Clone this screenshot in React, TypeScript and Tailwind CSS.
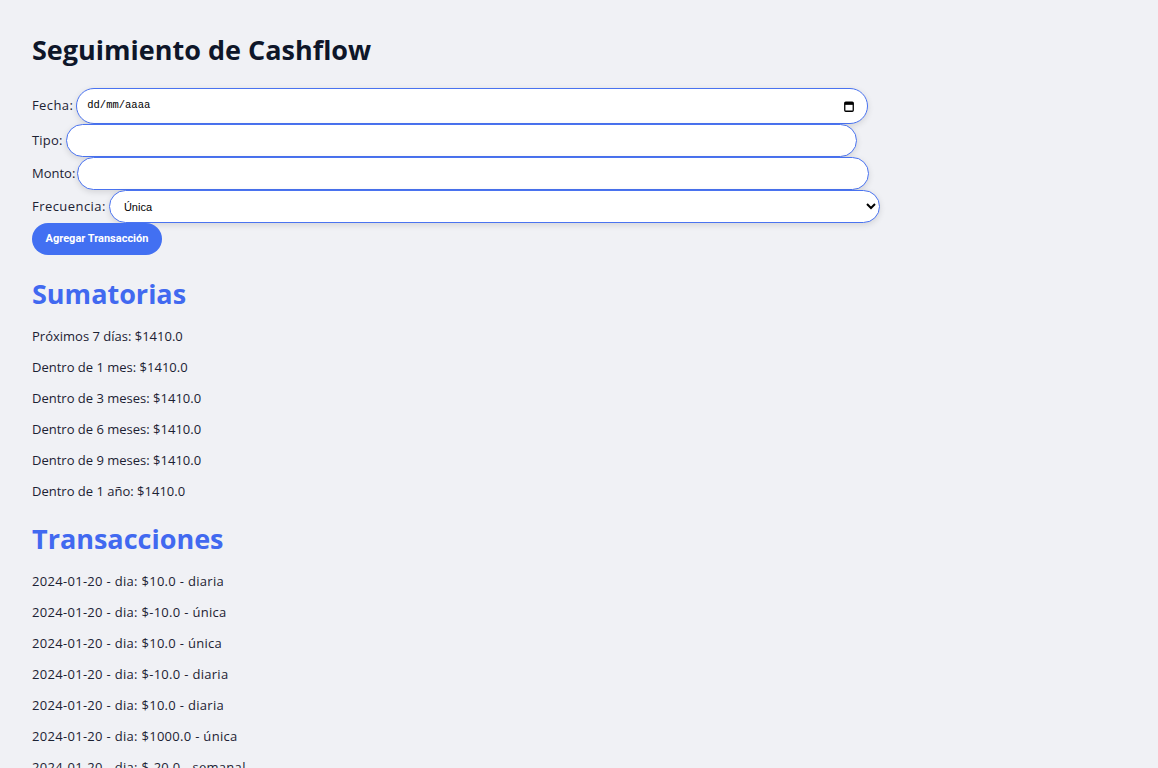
const SUMS = [
  'Próximos 7 días: $1410.0',
  'Dentro de 1 mes: $1410.0',
  'Dentro de 3 meses: $1410.0',
  'Dentro de 6 meses: $1410.0',
  'Dentro de 9 meses: $1410.0',
  'Dentro de 1 año: $1410.0',
];

const TXS = [
  '2024-01-20 - dia: $10.0 - diaria',
  '2024-01-20 - dia: $-10.0 - única',
  '2024-01-20 - dia: $10.0 - única',
  '2024-01-20 - dia: $-10.0 - diaria',
  '2024-01-20 - dia: $10.0 - diaria',
  '2024-01-20 - dia: $1000.0 - única',
  '2024-01-20 - dia: $-20.0 - semanal',
];

const field =
  'bg-white border border-[#4a73f0] rounded-full shadow-[0_2px_6px_rgba(0,0,0,0.12)] outline-none';

function CalIcon() {
  return (
    <svg width="10" height="11" viewBox="0 0 10 11" className="text-black">
      <rect x="0.75" y="1.25" width="8.5" height="9" rx="1" fill="none" stroke="currentColor" strokeWidth="1.3" />
      <rect x="0.75" y="1.25" width="8.5" height="2.6" fill="currentColor" />
    </svg>
  );
}

export default function App() {
  return (
    <div
      className="min-h-screen bg-[#f0f1f5] px-8 pt-[33px] text-[#1c2233]"
      style={{ fontFamily: '"Open Sans", "Noto Sans", sans-serif' }}
    >
      <h1 className="text-[27px] font-bold leading-[34px] text-[#0e1629]">Seguimiento de Cashflow</h1>

      <form className="mt-[21px] text-[13px]" onSubmit={(e) => e.preventDefault()}>
        {/* Fecha */}
        <div className="flex items-center h-[36px]">
          <label className="mr-[3px] tracking-[0.4px]">Fecha:</label>
          <div className={`${field} w-[792px] h-[36px] flex items-center justify-between pl-[10px] pr-[13px]`}>
            <span className="text-[10.5px] text-black" style={{ fontFamily: '"Liberation Mono", monospace' }}>
              dd/mm/aaaa
            </span>
            <CalIcon />
          </div>
        </div>
        {/* Tipo */}
        <div className="flex items-center h-[33px]">
          <label className="mr-[3px] tracking-[0.2px]">Tipo:</label>
          <input type="text" className={`${field} w-[791px] h-[33px] px-[10px]`} />
        </div>
        {/* Monto */}
        <div className="flex items-center h-[33px]">
          <label className="mr-[2px] tracking-[0px]">Monto:</label>
          <input type="text" className={`${field} w-[792px] h-[33px] px-[10px]`} />
        </div>
        {/* Frecuencia */}
        <div className="flex items-center h-[33px]">
          <label className="mr-[3px] tracking-[0.45px]">Frecuencia:</label>
          <select
            className={`${field} w-[771px] h-[33px] pl-[10px] pr-[6px] text-[11px] text-black`}
            style={{ fontFamily: '"Liberation Sans", Arial, sans-serif' }}
            defaultValue="unica"
          >
            <option value="unica">Única</option>
            <option value="diaria">Diaria</option>
            <option value="semanal">Semanal</option>
            <option value="mensual">Mensual</option>
          </select>
        </div>
        <button
          type="submit"
          className="h-[32px] w-[130px] rounded-full bg-[#4270f2] text-white text-[11px] font-bold"
          style={{ fontFamily: 'Roboto, "Liberation Sans", sans-serif' }}
        >
          Agregar Transacción
        </button>
      </form>

      <h2 className="mt-[22px] text-[27px] font-bold leading-[34px] text-[#4169f0]">Sumatorias</h2>
      <div className="pt-[3px]">
        {SUMS.map((s) => (
          <p key={s} className="text-[13px] leading-[18px] my-[13px]">{s}</p>
        ))}
      </div>

      <h2 className="mt-[22px] text-[27px] font-bold leading-[34px] text-[#4169f0]">Transacciones</h2>
      <div className="pt-[3px]">
        {TXS.map((t, i) => (
          <p key={i} className="text-[13px] leading-[18px] my-[13px] tracking-[0.3px]">{t}</p>
        ))}
      </div>
    </div>
  );
}
